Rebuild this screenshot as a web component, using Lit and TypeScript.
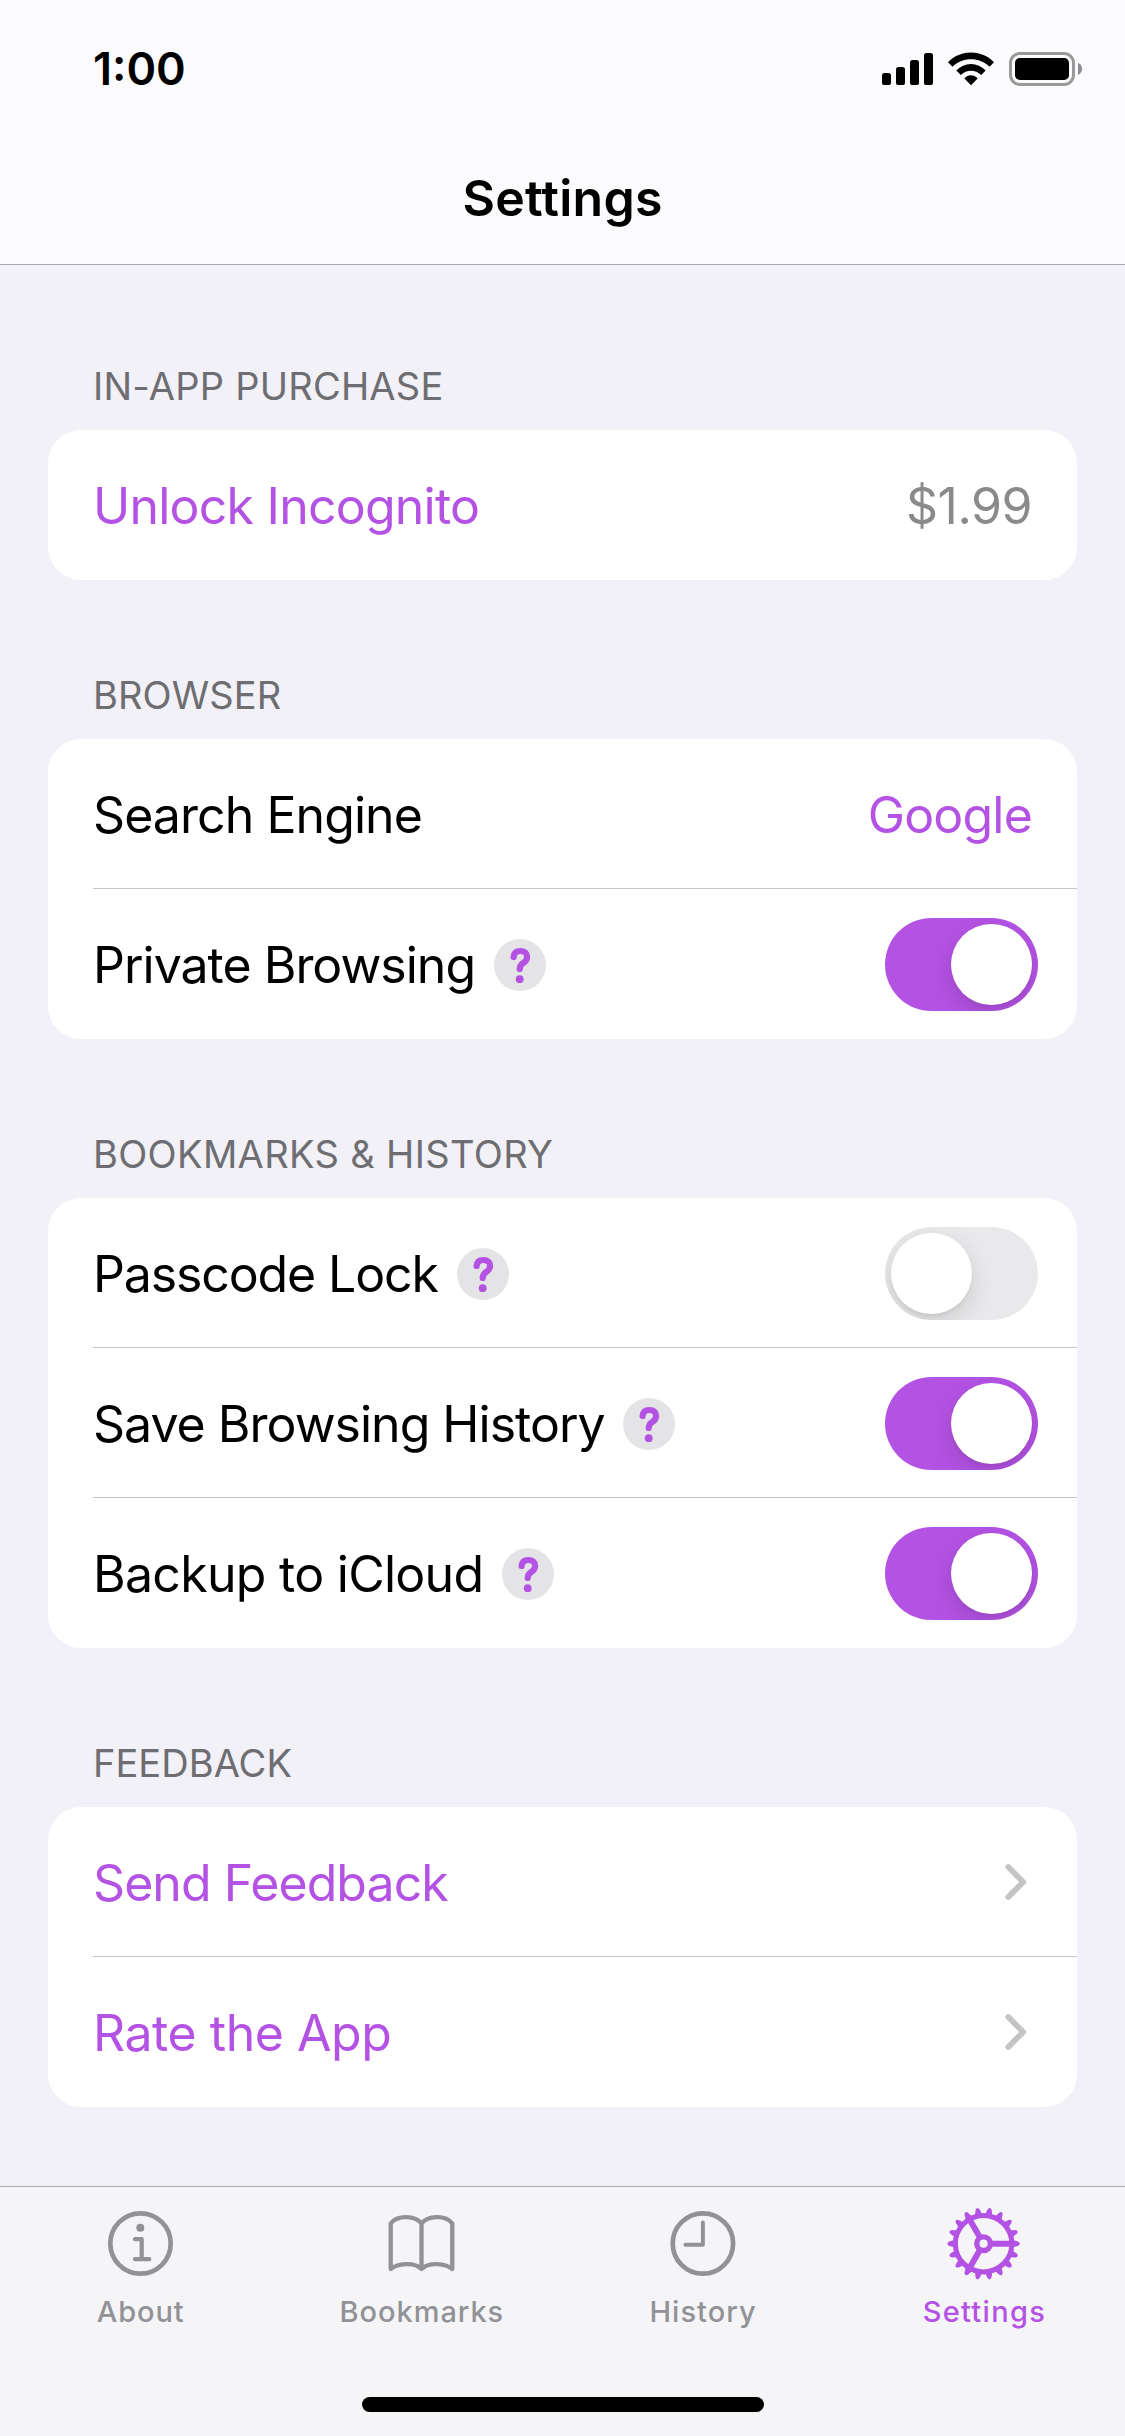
import { LitElement, html, css, svg, nothing } from "lit";
import { customElement, property } from "lit/decorators.js";
import { classMap } from "lit/directives/class-map.js";
import { styleMap } from "lit/directives/style-map.js";

interface Row {
  label: string;
  tracking: number;
  link?: boolean;
  help?: boolean;
  value?: string;
  valueTracking?: number;
  valueLink?: boolean;
  toggle?: boolean;
  chevron?: boolean;
}

interface Section {
  title: string;
  tracking: number;
  rows: Row[];
}

const sections: Section[] = [
  {
    title: "IN-APP PURCHASE",
    tracking: 0.24,
    rows: [{ label: "Unlock Incognito", tracking: -0.77, link: true, value: "$1.99", valueTracking: -0.5 }],
  },
  {
    title: "BROWSER",
    tracking: 0.12,
    rows: [
      { label: "Search Engine", tracking: -0.93, value: "Google", valueTracking: -0.81, valueLink: true },
      { label: "Private Browsing", tracking: -1, help: true, toggle: true },
    ],
  },
  {
    title: "BOOKMARKS & HISTORY",
    tracking: 0.35,
    rows: [
      { label: "Passcode Lock", tracking: -1.13, help: true, toggle: false },
      { label: "Save Browsing History", tracking: -0.99, help: true, toggle: true },
      { label: "Backup to iCloud", tracking: -0.72, help: true, toggle: true },
    ],
  },
  {
    title: "FEEDBACK",
    tracking: 0.05,
    rows: [
      { label: "Send Feedback", tracking: -0.95, link: true, chevron: true },
      { label: "Rate the App", tracking: -0.46, link: true, chevron: true },
    ],
  },
];

const spacing = (px: number) => styleMap({ letterSpacing: `${px}px` });

@customElement("status-bar")
export class StatusBar extends LitElement {
  static styles = css`
    :host {
      display: flex;
      align-items: center;
      justify-content: space-between;
      height: 138px;
      padding: 0 43px 0 93px;
    }
    .time {
      font-size: 45px;
      font-weight: 600;
      line-height: 138px;
      color: #000;
    }
    .icons {
      display: block;
    }
  `;

  render() {
    return html`
      <span class="time">1:00</span>
      <svg class="icons" width="200" height="34" viewBox="0 0 200 34">
        <rect x="0" y="21" width="9" height="12" rx="2.6" />
        <rect x="14" y="15" width="9" height="18" rx="2.6" />
        <rect x="28" y="8" width="9" height="25" rx="2.6" />
        <rect x="42" y="1" width="9" height="32" rx="2.6" />
        <path d="M66 10.3C78 -2.8 100 -2.8 112 10.3L107.5 14.8C98 4.6 80 4.6 70.500 14.8Z" />
        <path d="M74.300 18.600C82.200 9.900 95.800 9.900 103.700 18.600L99.200 23.100C93.600 17.200 84.400 17.200 78.800 23.100Z" />
        <path d="M82.400 26.600C86 22.200 92 22.200 95.600 26.600L89 33.200Z" />
        <rect x="128.500" y="1.500" width="63" height="31" rx="9.500" fill="none" stroke="#99999a" stroke-width="3" />
        <rect x="133" y="6" width="54" height="22" rx="4.800" />
        <path d="M196 11C201.400 13 201.400 21 196 23Z" fill="#8e8e92" />
      </svg>
    `;
  }
}

@customElement("toggle-switch")
export class ToggleSwitch extends LitElement {
  @property({ type: Boolean }) on = false;

  static styles = css`
    :host {
      display: block;
      flex: none;
    }
    .track {
      box-sizing: border-box;
      display: flex;
      width: 153px;
      height: 93px;
      padding: 6px;
      border-radius: 47px;
      background: #e9e9eb;
      overflow: hidden;
    }
    .track.on {
      justify-content: flex-end;
      background: #b452e4;
    }
    .knob {
      width: 81px;
      height: 81px;
      border-radius: 50%;
      background: #fff;
      box-shadow: 0 9px 24px rgba(0, 0, 0, 0.13), 0 3px 3px rgba(0, 0, 0, 0.04);
    }
  `;

  render() {
    return html`<div class=${classMap({ track: true, on: this.on })}><div class="knob"></div></div>`;
  }
}

@customElement("settings-row")
export class SettingsRow extends LitElement {
  @property({ attribute: false }) row!: Row;

  static styles = css`
    :host {
      display: flex;
      align-items: center;
      height: 150px;
      padding-right: 45px;
      box-sizing: border-box;
    }
    .label {
      font-size: 50px;
      line-height: 60px;
      padding-top: 2px;
      color: #000;
      white-space: nowrap;
    }
    .value {
      font-size: 50px;
      line-height: 60px;
      padding-top: 2px;
      color: #8a8a8d;
      white-space: nowrap;
    }
    .accent {
      color: #b452e4;
    }
    .spacer {
      flex: 1;
    }
    .help {
      display: block;
      margin: 2px 0 0 18.8px;
    }
    .toggle {
      margin: 1px -6px 0 0;
    }
    .chevron {
      display: block;
      margin: 0 5px 0 0;
    }
  `;

  render() {
    const r = this.row;
    return html`
      <span class=${classMap({ label: true, accent: !!r.link })} style=${spacing(r.tracking)}>${r.label}</span>
      ${r.help
        ? html`<svg class="help" width="52" height="52" viewBox="0 0 52 52">
            <circle cx="26" cy="26" r="26" fill="#e4e4e6" />
            <path
              d="M19.600 18C19.900 14 22.300 12 26.300 12C30.600 12 33.100 14.300 33.100 17.900C33.100 20.700 31.800 22.200 29.500 23.800C26.900 25.600 25.700 27 25.700 29.900"
              fill="none"
              stroke="#b452e4"
              stroke-width="6.200"
              stroke-linecap="round"
              stroke-linejoin="round"
            />
            <circle cx="25.700" cy="40.200" r="3.900" fill="#b452e4" />
          </svg>`
        : nothing}
      <span class="spacer"></span>
      ${r.value
        ? html`<span class=${classMap({ value: true, accent: !!r.valueLink })} style=${spacing(r.valueTracking ?? 0)}
            >${r.value}</span
          >`
        : nothing}
      ${r.toggle !== undefined ? html`<toggle-switch class="toggle" ?on=${r.toggle}></toggle-switch>` : nothing}
      ${r.chevron
        ? html`<svg class="chevron" width="22" height="38" viewBox="0 0 22 38">
            <path
              d="M3.300 4L18.200 19L3.300 34"
              fill="none"
              stroke="#c4c4c6"
              stroke-width="5.800"
              stroke-linecap="round"
              stroke-linejoin="round"
            />
          </svg>`
        : nothing}
    `;
  }
}

const toothAngles = Array.from({ length: 18 }, (_, i) => i * 20);

const icons = {
  about: svg`
    <circle cx="37.500" cy="37.500" r="30.200" fill="none" stroke="currentColor" stroke-width="4.700" />
    <circle cx="37.300" cy="21.800" r="4" fill="currentColor" />
    <path d="M32 33.200H38.700V53M32 53.200H46.300" fill="none" stroke="currentColor" stroke-width="4.200" stroke-linecap="round" stroke-linejoin="round" />`,
  bookmarks: svg`
    <path d="M37.500 17.500C31.500 9.500 13.500 8.500 6.700 17.500V63C13.500 57.500 30 55.500 37.500 63C45 55.500 61.500 57.500 68.300 63V17.500C61.500 8.500 43.500 9.500 37.500 17.500V63" fill="none" stroke="currentColor" stroke-width="4.300" stroke-linejoin="round" stroke-linecap="round" />`,
  history: svg`
    <circle cx="36.900" cy="37.500" r="30.200" fill="none" stroke="currentColor" stroke-width="4.700" />
    <path d="M36.900 16.500V38.700H19.400" fill="none" stroke="currentColor" stroke-width="3.900" stroke-linecap="round" stroke-linejoin="round" />`,
  settings: svg`
    <g transform="translate(-0.900 0)">
      <g fill="none" stroke="currentColor">
        <circle cx="37.500" cy="37.700" r="28.200" stroke-width="5" />
        <circle cx="37.500" cy="37.700" r="6.800" stroke-width="5.400" />
        <path d="M46 37.700H66M33.200 30.300L23.200 13M33.200 45.100L23.200 62.400" stroke-width="6" />
      </g>
      ${toothAngles.map(
        (a) => svg`<path d="M65.500 33.300Q68.500 34.900 71.800 35.500Q75.800 37.700 71.800 39.900Q68.500 40.500 65.500 42.100Z" fill="currentColor" transform="rotate(${a} 37.500 37.700)" />`,
      )}
    </g>`,
};

const tabs = [
  { name: "About", icon: icons.about, tracking: 0.9 },
  { name: "Bookmarks", icon: icons.bookmarks, tracking: 0.95 },
  { name: "History", icon: icons.history, tracking: 1.05 },
  { name: "Settings", icon: icons.settings, tracking: 1.3 },
];

@customElement("tab-bar")
export class TabBar extends LitElement {
  @property() active = "Settings";

  static styles = css`
    :host {
      display: block;
      box-sizing: border-box;
      height: 250px;
      border-top: 1px solid #a9a9ac;
      background: #f5f5f7;
    }
    .tabs {
      display: grid;
      grid-template-columns: repeat(4, 1fr);
      height: 210px;
    }
    .tab {
      display: flex;
      flex-direction: column;
      align-items: center;
      padding-top: 19px;
      color: #929296;
    }
    .tab.active {
      color: #b452e4;
    }
    .icon {
      display: block;
      overflow: visible;
    }
    .name {
      margin-top: 13px;
      font-size: 29px;
      font-weight: 500;
      line-height: 36px;
    }
    .home {
      width: 402px;
      height: 15px;
      margin-left: 362px;
      border-radius: 8px;
      background: #000;
    }
  `;

  render() {
    return html`
      <div class="tabs">
        ${tabs.map(
          (t) => html`<div class=${classMap({ tab: true, active: t.name === this.active })}>
            <svg class="icon" width="75" height="75" viewBox="0 0 75 75">${t.icon}</svg>
            <span class="name" style=${spacing(t.tracking)}>${t.name}</span>
          </div>`,
        )}
      </div>
      <div class="home"></div>
    `;
  }
}

@customElement("app-root")
export class AppRoot extends LitElement {
  static styles = css`
    :host {
      display: flex;
      flex-direction: column;
      width: 1125px;
      height: 2436px;
      overflow: hidden;
      background: #f2f1f7;
      font-family: Inter, "Liberation Sans", sans-serif;
    }
    .header {
      flex: none;
      box-sizing: border-box;
      height: 265px;
      border-bottom: 1px solid #a9a9ac;
      background: #fbfbfd;
    }
    .title {
      margin: 0;
      height: 126px;
      font-size: 50px;
      font-weight: 600;
      line-height: 120px;
      letter-spacing: 0.25px;
      text-align: center;
      color: #000;
    }
    .content {
      flex: 1;
      padding: 6px 48px 0;
    }
    .heading {
      margin: 0;
      padding: 85px 0 14px 45px;
      font-size: 38px;
      font-weight: 400;
      line-height: 60px;
      color: #6d6d72;
    }
    .card {
      border-radius: 33px;
      background: #fff;
      padding-left: 45px;
    }
    .row + .row {
      position: relative;
    }
    .row + .row::before {
      content: "";
      position: absolute;
      left: 0;
      right: 0;
      top: -1px;
      height: 1px;
      background: #c5c5c7;
    }
  `;

  render() {
    return html`
      <header class="header">
        <status-bar></status-bar>
        <h1 class="title">Settings</h1>
      </header>
      <main class="content">
        ${sections.map(
          (s) => html`<section>
            <h2 class="heading" style=${spacing(s.tracking)}>${s.title}</h2>
            <div class="card">${s.rows.map((r) => html`<settings-row class="row" .row=${r}></settings-row>`)}</div>
          </section>`,
        )}
      </main>
      <tab-bar active="Settings"></tab-bar>
    `;
  }
}
